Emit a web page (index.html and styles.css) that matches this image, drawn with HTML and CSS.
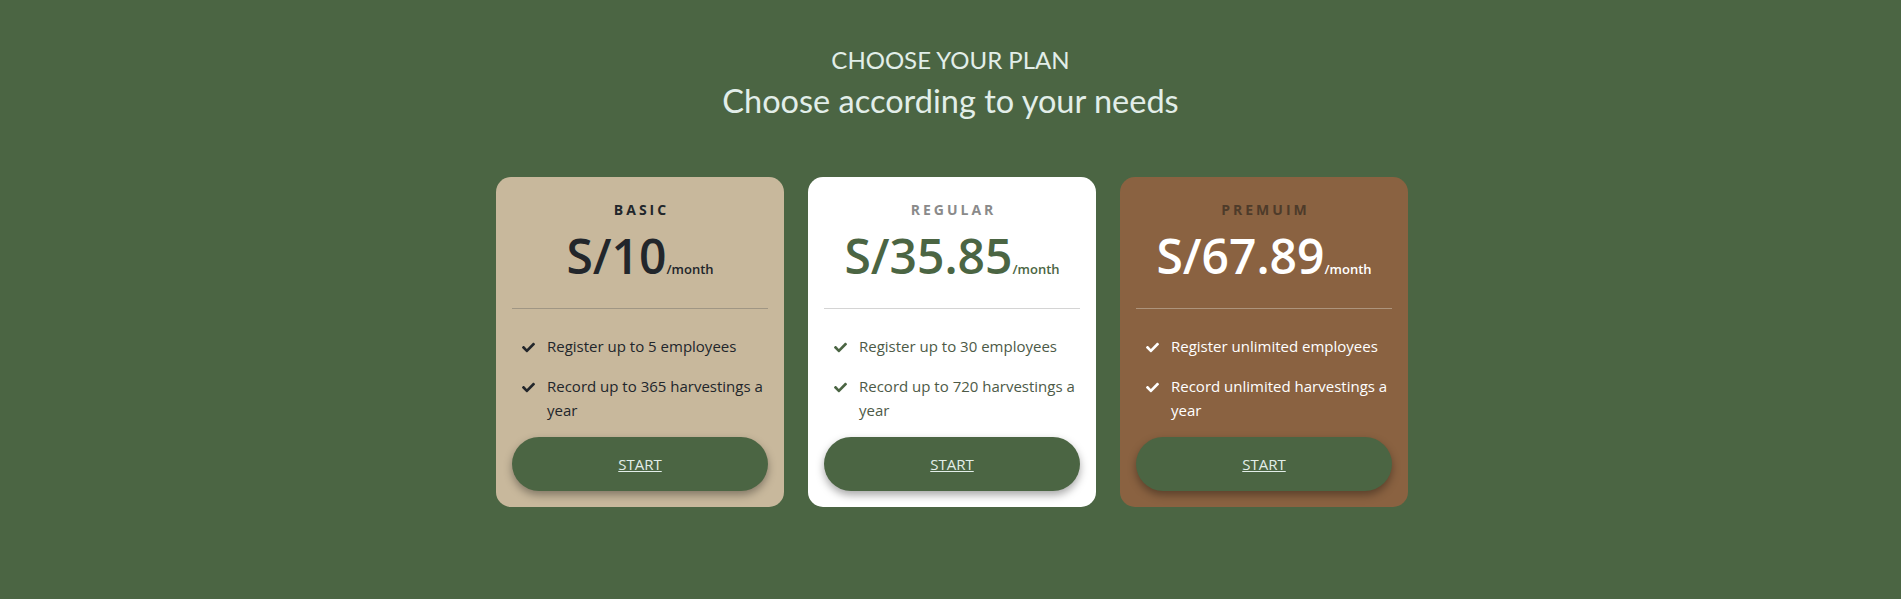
FILE: index.html
```html
<!DOCTYPE html>
<html lang="en">
<head>
<meta charset="utf-8">
<title>Plans</title>
<link rel="stylesheet" href="styles.css">
</head>
<body>
<section class="plans">
  <header class="plans-head">
    <p class="eyebrow">CHOOSE YOUR PLAN</p>
    <h2 class="title">Choose according to your needs</h2>
  </header>
  <div class="cards">
    <article class="card card-basic">
      <p class="card-name">BASIC</p>
      <p class="price">S/10<span class="per">/month</span></p>
      <hr class="divider">
      <ul class="features">
        <li><svg class="check" viewBox="0 0 512 512"><path d="M173.9 439.4l-166.4-166.4c-10-10-10-26.2 0-36.2l36.2-36.2c10-10 26.2-10 36.2 0L192 312.7 432.1 72.6c10-10 26.2-10 36.2 0l36.2 36.2c10 10 10 26.2 0 36.2l-294.4 294.4c-10 10-26.2 10-36.2 0z"/></svg><span>Register up to 5 employees</span></li>
        <li><svg class="check" viewBox="0 0 512 512"><path d="M173.9 439.4l-166.4-166.4c-10-10-10-26.2 0-36.2l36.2-36.2c10-10 26.2-10 36.2 0L192 312.7 432.1 72.6c10-10 26.2-10 36.2 0l36.2 36.2c10 10 10 26.2 0 36.2l-294.4 294.4c-10 10-26.2 10-36.2 0z"/></svg><span>Record up to 365 harvestings a year</span></li>
      </ul>
      <a class="btn" href="#">START</a>
    </article>
    <article class="card card-regular">
      <p class="card-name">REGULAR</p>
      <p class="price">S/35.85<span class="per">/month</span></p>
      <hr class="divider">
      <ul class="features">
        <li><svg class="check" viewBox="0 0 512 512"><path d="M173.9 439.4l-166.4-166.4c-10-10-10-26.2 0-36.2l36.2-36.2c10-10 26.2-10 36.2 0L192 312.7 432.1 72.6c10-10 26.2-10 36.2 0l36.2 36.2c10 10 10 26.2 0 36.2l-294.4 294.4c-10 10-26.2 10-36.2 0z"/></svg><span>Register up to 30 employees</span></li>
        <li><svg class="check" viewBox="0 0 512 512"><path d="M173.9 439.4l-166.4-166.4c-10-10-10-26.2 0-36.2l36.2-36.2c10-10 26.2-10 36.2 0L192 312.7 432.1 72.6c10-10 26.2-10 36.2 0l36.2 36.2c10 10 10 26.2 0 36.2l-294.4 294.4c-10 10-26.2 10-36.2 0z"/></svg><span>Record up to 720 harvestings a year</span></li>
      </ul>
      <a class="btn" href="#">START</a>
    </article>
    <article class="card card-premium">
      <p class="card-name">PREMUIM</p>
      <p class="price">S/67.89<span class="per">/month</span></p>
      <hr class="divider">
      <ul class="features">
        <li><svg class="check" viewBox="0 0 512 512"><path d="M173.9 439.4l-166.4-166.4c-10-10-10-26.2 0-36.2l36.2-36.2c10-10 26.2-10 36.2 0L192 312.7 432.1 72.6c10-10 26.2-10 36.2 0l36.2 36.2c10 10 10 26.2 0 36.2l-294.4 294.4c-10 10-26.2 10-36.2 0z"/></svg><span>Register unlimited employees</span></li>
        <li><svg class="check" viewBox="0 0 512 512"><path d="M173.9 439.4l-166.4-166.4c-10-10-10-26.2 0-36.2l36.2-36.2c10-10 26.2-10 36.2 0L192 312.7 432.1 72.6c10-10 26.2-10 36.2 0l36.2 36.2c10 10 10 26.2 0 36.2l-294.4 294.4c-10 10-26.2 10-36.2 0z"/></svg><span>Record unlimited harvestings a year</span></li>
      </ul>
      <a class="btn" href="#">START</a>
    </article>
  </div>
</section>
</body>
</html>
```
FILE: styles.css
```css
* { box-sizing: border-box; }
html, body { margin: 0; padding: 0; }
body {
  background: #4b6543;
  font-family: "Open Sans", "Liberation Sans", sans-serif;
  height: 599px;
  overflow: hidden;
}
.plans { padding-top: 45px; }
.plans-head {
  text-align: center;
  color: #e2eee9;
  font-family: Lato, "Noto Sans", sans-serif;
}
.eyebrow {
  margin: 0;
  font-size: 24px;
  line-height: 30px;
  font-weight: 400;
}
.title {
  margin: 6px 0 0;
  font-size: 32.5px;
  line-height: 40px;
  font-weight: 400;
}
.cards {
  display: flex;
  justify-content: center;
  gap: 24px;
  margin-top: 56px;
  padding-left: 3px;
}
.card {
  width: 288px;
  height: 330px;
  border-radius: 15px;
  padding: 23px 16px 16px;
  display: flex;
  flex-direction: column;
}
.card-name {
  margin: 0;
  text-align: center;
  font-size: 14px;
  line-height: 19px;
  font-weight: 700;
  letter-spacing: 3px;
  padding-left: 3px;
}
.price {
  margin: 8px 0 0;
  text-align: center;
  font-size: 48px;
  line-height: 58px;
  font-weight: 600;
}
.per {
  font-size: 13px;
  line-height: 0;
  font-weight: 600;
}
.divider {
  margin: 23px 0 0;
  border: 0;
  height: 1px;
  flex: none;
}
.features {
  list-style: none;
  margin: 25px 0 0;
  padding: 0 0 0 10px;
  display: flex;
  flex-direction: column;
  gap: 16px;
}
.features li {
  display: flex;
  align-items: flex-start;
  gap: 12px;
  font-size: 15px;
  line-height: 24px;
}
.check {
  width: 13px;
  height: 13px;
  flex: none;
  margin-top: 7px;
}
.btn {
  margin-top: auto;
  height: 54px;
  flex: none;
  border-radius: 27px;
  background: #4b6543;
  color: #e2eee9;
  display: flex;
  align-items: center;
  justify-content: center;
  font-size: 15px;
  text-decoration: underline;
  box-shadow: 0 4px 8px rgba(0, 0, 0, 0.35);
}
.card-basic { background: #c8b89c; color: #22262b; }
.card-basic .divider { background: #a09684; }
.card-basic .check { fill: #22262b; }
.card-regular { background: #ffffff; color: #4b6543; }
.card-regular .card-name { color: #8a8a8a; }
.card-regular .features { color: #4d5a47; }
.card-regular .divider { background: #d4d4d4; }
.card-regular .check { fill: #4b6543; }
.card-premium { background: #8a6241; color: #ffffff; }
.card-premium .card-name { color: #4e3b2a; }
.card-premium .divider { background: #ad947c; }
.card-premium .check { fill: #ffffff; }
```
